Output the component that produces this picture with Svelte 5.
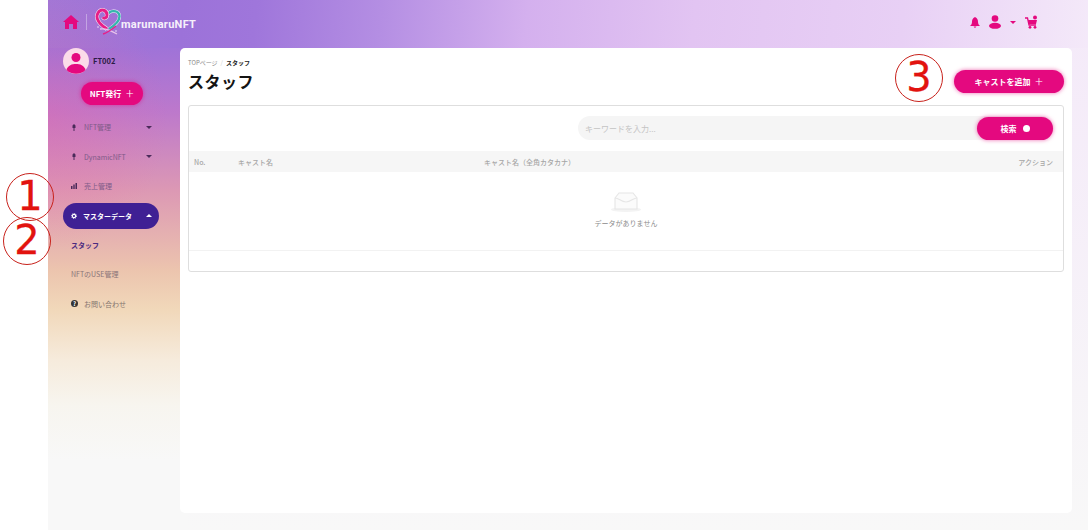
<script>
  const menu = [
    { label: "NFT管理", icon: "pin", caret: "down" },
    { label: "DynamicNFT", icon: "pin", caret: "down" },
    { label: "売上管理", icon: "bars" }
  ];
</script>

<div class="page">
  <div class="gutter"></div>
  <div class="shell">
    <header class="topbar">
      <div class="brand">
        <svg class="home" viewBox="0 0 16 14" width="16" height="14">
          <path d="M8 0 L16 7 L14 7 L14 14 L10 14 L10 9 L6 9 L6 14 L2 14 L2 7 L0 7 Z" fill="#e4097f" />
        </svg>
        <span class="sep"></span>
        <svg class="logo" viewBox="0 0 26 28" width="26" height="28" fill="none">
          <path d="M12 7 C15 2 22 2 24 6 C26 11 22 16 14 21" stroke="#f4f0fa" stroke-width="3.200" />
          <path d="M12 7 C15 2 22 2 24 6 C26 11 22 16 14 21" stroke="#35b5ad" stroke-width="2.400" />
          <path d="M12 21 C4 16 0 10 3 5 C6 0 12 2 12 7 C12 10 9 11 8 9" stroke="#f4f0fa" stroke-width="4" />
          <path d="M12 21 C4 16 0 10 3 5 C6 0 12 2 12 7 C12 10 9 11 8 9" stroke="#e81f87" stroke-width="3" />
          <path d="M5 21 C10 20 17 23 22 26" stroke="#e9c3ea" stroke-width="1.300" />
          <path d="M21 18 C16 22 12 25 8 26" stroke="#e81f87" stroke-width="1.300" />
          <circle cx="3" cy="19" r=".7" fill="#fff" />
          <circle cx="21" cy="23" r=".7" fill="#fff" />
        </svg>
        <span class="logotext">marumaruNFT</span>
      </div>
      <div class="tools">
        <svg viewBox="0 0 10 11" width="10" height="11"><path d="M5 0 C7.500 1 8 3 8 5 C8 7 9 8 10 9 L0 9 C1 8 2 7 2 5 C2 3 2.500 1 5 0 Z M3.500 9.500 H6.500 L5 11 Z" fill="#e4097f" /></svg>
        <svg viewBox="0 0 12 14" width="12" height="14"><circle cx="6" cy="3.500" r="3.300" fill="#e4097f" /><ellipse cx="6" cy="10.800" rx="6" ry="3" fill="#e4097f" /></svg>
        <span class="caret down pink"></span>
        <svg viewBox="0 0 13 14" width="13" height="14" fill="none"><path d="M0 3 H2.500 L4 10 H11" stroke="#e4097f" stroke-width="1.300" /><path d="M3 5 H12 L11 9 H4 Z" fill="#e4097f" /><circle cx="5" cy="12.300" r="1.400" fill="#e4097f" /><circle cx="10" cy="12.300" r="1.400" fill="#e4097f" /><circle cx="10" cy="2.500" r="2" fill="#e4097f" /></svg>
      </div>
    </header>

    <div class="body">
      <aside class="sidebar">
        <div class="profile">
          <svg viewBox="0 0 26 26" width="26" height="26">
            <circle cx="13" cy="13" r="13" fill="#fbdbe9" />
            <circle cx="13" cy="9.500" r="4.500" fill="#e4097f" />
            <path d="M3.500 22 C5 17 9 16 13 16 C17 16 21 17 22.500 22 C18 27 8 27 3.500 22 Z" fill="#e4097f" />
          </svg>
          <span class="name">FT002</span>
        </div>
        <button class="pink-btn nft">NFT発行<span class="plus">＋</span></button>

        <nav class="menu">
          {#each menu as item}
            <div class="item">
              {#if item.icon === "pin"}
                <svg viewBox="0 0 6 7" width="6" height="7"><path d="M3 0 L4.500 1.500 V4 H3.500 V7 H2.500 V4 H1.500 V1.500 Z" fill="#4a2a5a" /></svg>
              {:else}
                <svg viewBox="0 0 6 6" width="6" height="6"><path d="M0 3 H1.500 V6 H0 Z M2.300 1.500 H3.700 V6 H2.300 Z M4.500 0 H6 V6 H4.500 Z" fill="#4a2a5a" /></svg>
              {/if}
              <span>{item.label}</span>
              {#if item.caret}<span class="caret down dark"></span>{/if}
            </div>
          {/each}

          <div class="item active">
            <svg viewBox="0 0 8 8" width="6" height="6" fill="none"><circle cx="4" cy="4" r="2.200" stroke="#fff" stroke-width="1.500" /><circle cx="4" cy="4" r="3.400" stroke="#fff" stroke-width="1.200" stroke-dasharray="1.300 1.370" /></svg>
            <span>マスターデータ</span>
            <span class="caret up"></span>
          </div>
          <div class="sub current">スタッフ</div>
          <div class="sub">NFTのUSE管理</div>
          <div class="item help">
            <span class="q">?</span>
            <span>お問い合わせ</span>
          </div>
        </nav>
      </aside>

      <main class="card">
        <div class="head">
          <div>
            <div class="crumbs"><span>TOPページ</span><i>/</i><b>スタッフ</b></div>
            <h1>スタッフ</h1>
          </div>
          <button class="pink-btn add">キャストを追加<span class="plus">＋</span></button>
        </div>

        <section class="panel">
          <div class="search">
            <div class="field">
              <span>キーワードを入力...</span>
              <button class="pink-btn find">検索<span class="dot"></span></button>
            </div>
          </div>
          <div class="thead">
            <span class="c-no">No.</span>
            <span class="c-name">キャスト名</span>
            <span class="c-kana">キャスト名（全角カタカナ）</span>
            <span class="c-act">アクション</span>
          </div>
          <div class="empty">
            <svg viewBox="0 0 30 20" width="30" height="20" fill="none">
              <ellipse cx="15" cy="17.500" rx="15" ry="2.500" fill="#f3f3f3" />
              <path d="M4 6 L8 1 H22 L26 6 V17 H4 Z" fill="#fbfbfb" stroke="#e6e6e6" stroke-width="1.100" />
              <path d="M4 6 C8 6 10 10 15 10 C20 10 22 6 26 6" stroke="#e6e6e6" stroke-width="1.100" />
            </svg>
            <span>データがありません</span>
          </div>
          <div class="foot"></div>
        </section>
      </main>
    </div>
  </div>

  <span class="mark one">1</span>
  <span class="mark two">2</span>
  <span class="mark three">3</span>
</div>

<style>
  :global(body) {
    margin: 0;
    background: #fff;
    font-family: "Noto Sans CJK JP", "Noto Sans", sans-serif;
  }

  .page {
    position: relative;
    display: flex;
    width: 1088px;
    height: 530px;
    overflow: hidden;
  }

  .gutter {
    width: 48px;
    background: #fff;
  }

  .shell {
    flex: 1;
    display: flex;
    flex-direction: column;
    background:
      radial-gradient(ellipse 120px 130px at 0 120px, rgba(238, 100, 160, 0.32), rgba(238, 100, 160, 0)),
      linear-gradient(95deg, #a277d6 0%, #9c72d9 13%, #9f76db 20%, #b48ee3 32%, #d4b0ee 46%, #e2c4f2 62%, #e8d0f5 82%, #f4e9f9 100%) top / 100% 48px no-repeat,
      linear-gradient(180deg, #f4e9f9 0, #f8f8f8 100%) right top / 900px 100% no-repeat,
      linear-gradient(180deg, #9f73d8 48px, #bc78cc 110px, #dc98b4 190px, #ecc4ae 270px, #f1d8ba 310px, #f6ebdc 360px, #f7f5ef 405px, #f8f8f8 460px);
  }

  .topbar {
    height: 48px;
    display: flex;
    align-items: center;
    justify-content: space-between;
    box-sizing: border-box;
    padding: 0 50px 4px 15px;
  }

  .brand {
    display: flex;
    align-items: center;
  }

  .sep {
    width: 1px;
    height: 16px;
    margin: 0 8px 0 7px;
    background: rgba(255, 255, 255, 0.35);
  }

  .logotext {
    margin-top: 4px;
    color: #f6f0fb;
    font: 700 11px Roboto, sans-serif;
    letter-spacing: 0.3px;
  }

  .tools {
    display: flex;
    align-items: center;
    gap: 9px;
  }

  .caret {
    width: 0;
    height: 0;
    border-left: 3.500px solid transparent;
    border-right: 3.500px solid transparent;
  }

  .caret.down { border-top: 3.500px solid #4a2a5a; }
  .caret.down.pink { border-top-color: #e4097f; }
  .caret.up { border-bottom: 3.500px solid #fff; }

  .body {
    flex: 1;
    display: flex;
    min-height: 0;
  }

  .sidebar {
    width: 132px;
    flex: none;
  }

  .profile {
    display: flex;
    align-items: center;
    gap: 4px;
    padding-left: 15px;
  }

  .name {
    margin-top: -2px;
    color: #2c1b45;
    font-size: 7.500px;
    font-weight: 700;
  }

  .pink-btn {
    display: flex;
    align-items: center;
    justify-content: center;
    border: 0;
    padding: 0;
    border-radius: 12px;
    background: #e4097f;
    box-shadow: 0 0 4px rgba(228, 9, 127, 0.6);
    color: #fff;
    font-family: inherit;
    font-size: 8px;
    font-weight: 700;
  }

  .plus {
    margin-left: 4px;
    font-weight: 400;
    font-size: 9px;
  }

  .nft {
    width: 62px;
    height: 23px;
    margin: 8px 0 0 33px;
  }

  .menu {
    margin-top: 12px;
    padding-left: 15px;
    width: 96px;
  }

  .item {
    display: flex;
    align-items: center;
    height: 20px;
    margin-bottom: 9.500px;
    padding-left: 8px;
    color: #7e5a88;
    font-size: 7px;
  }

  .item svg {
    flex: none;
    margin-right: 7px;
  }

  .item span:not(.caret):not(.q) {
    flex: 1;
  }

  .item .caret {
    margin-right: 7px;
  }

  .active {
    height: 26px;
    margin: -3px 0 6px;
    border-radius: 13px;
    background: #3f2094;
    color: #fff;
    font-weight: 700;
  }

  .active svg {
    margin-right: 6px;
  }

  .sub {
    display: flex;
    align-items: center;
    height: 20px;
    margin-bottom: 9.500px;
    padding-left: 8px;
    color: #8a7478;
    font-size: 7px;
  }

  .current {
    color: #4b2a80;
    font-weight: 700;
  }

  .help {
    color: #84746e;
  }

  .q {
    width: 7px;
    height: 7px;
    margin-right: 6px;
    border-radius: 50%;
    background: #333;
    color: #fff;
    font-size: 6px;
    font-weight: 700;
    line-height: 7px;
    text-align: center;
  }

  .card {
    width: 892px;
    height: 465px;
    box-sizing: border-box;
    padding: 8px;
    border-radius: 5px;
    background: #fff;
  }

  .head {
    display: flex;
    justify-content: space-between;
    align-items: flex-start;
    height: 49px;
  }

  .crumbs {
    display: flex;
    align-items: center;
    gap: 3px;
    height: 12px;
    color: #888;
    font-size: 6px;
  }

  .crumbs i {
    color: #ccc;
    font-style: normal;
  }

  .crumbs b {
    color: #222;
  }

  h1 {
    margin: 0;
    color: #141414;
    font-size: 16px;
    font-weight: 700;
    line-height: 26px;
    letter-spacing: 0.5px;
  }

  .add {
    width: 110px;
    height: 23px;
    margin-top: 14px;
  }

  .panel {
    height: 167px;
    box-sizing: border-box;
    border: 1px solid #dedede;
    border-radius: 3px;
  }

  .search {
    display: flex;
    justify-content: flex-end;
    padding: 10px 10px 0;
  }

  .field {
    width: 475px;
    height: 24px;
    display: flex;
    align-items: center;
    justify-content: space-between;
    padding-left: 7px;
    box-sizing: border-box;
    border-radius: 12px;
    background: #f5f5f5;
    color: #c4c4c4;
    font-size: 8px;
  }

  .find {
    width: 76px;
    height: 23px;
  }

  .dot {
    width: 7px;
    height: 7px;
    margin-left: 6px;
    border-radius: 50%;
    background: #fff;
  }

  .thead {
    display: flex;
    align-items: center;
    height: 21px;
    margin-top: 11px;
    padding: 0 10px 0 5px;
    background: #f6f6f6;
    color: #a6a6a6;
    font-size: 7px;
    font-weight: 500;
  }

  .c-no { width: 44px; }
  .c-name { width: 246px; }
  .c-kana { flex: 1; }

  .empty {
    height: 79px;
    box-sizing: border-box;
    padding-top: 20px;
    display: flex;
    flex-direction: column;
    align-items: center;
    gap: 5px;
    border-bottom: 1px solid #f2f2f2;
    color: #8c8c8c;
    font-size: 7px;
    line-height: 12px;
  }

  .foot {
    height: 20px;
  }

  .mark {
    position: absolute;
    box-sizing: border-box;
    width: 48px;
    height: 48px;
    border: 1.500px solid #c8221c;
    border-radius: 50%;
    color: #e2130f;
    font: 400 40px/44px "DejaVu Sans", sans-serif;
    text-align: center;
    -webkit-text-stroke: 0.3px #e2130f;
  }

  .one { left: 6px; top: 173px; }
  .two { left: 3px; top: 217px; }
  .three { left: 895px; top: 54px; }
</style>
